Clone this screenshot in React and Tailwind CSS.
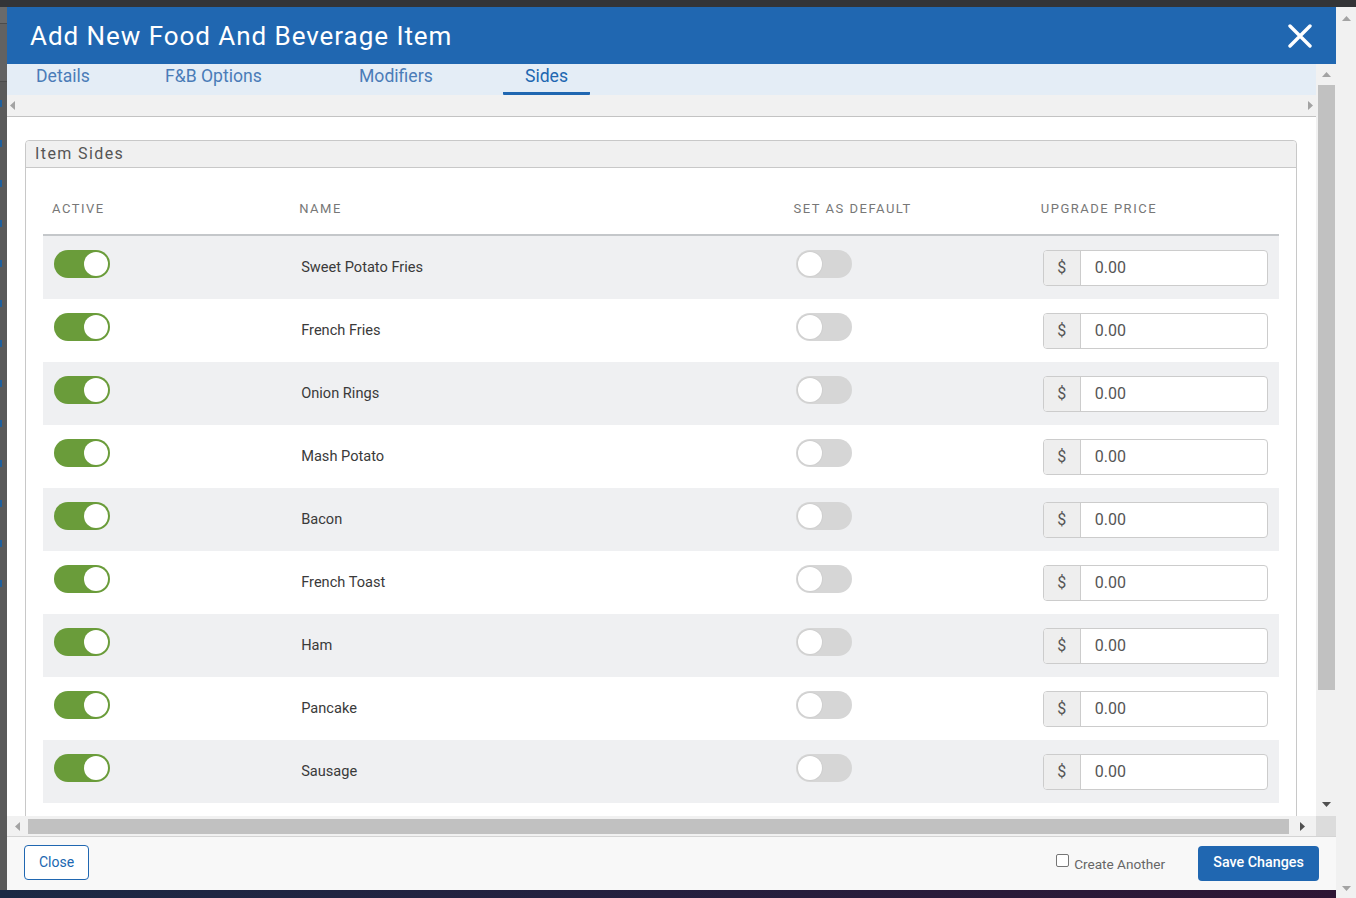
import React from "react";

const ROWS = [
  "Sweet Potato Fries",
  "French Fries",
  "Onion Rings",
  "Mash Potato",
  "Bacon",
  "French Toast",
  "Ham",
  "Pancake",
  "Sausage",
];

function Arrow({ dir, color = "#a3a3a3" }) {
  const pts = {
    up: "0,6 4.5,1 9,6",
    down: "0,1 4.5,6 9,1",
    left: "6,0 1,4.5 6,9",
    right: "1,0 6,4.5 1,9",
  }[dir];
  const vert = dir === "up" || dir === "down";
  return (
    <svg width={vert ? 9 : 7} height={vert ? 7 : 9} viewBox={vert ? "0 0 9 7" : "0 0 7 9"} className="block">
      <polygon points={pts} fill={color} />
    </svg>
  );
}

function ToggleOn() {
  return (
    <div className="w-[56px] h-[28px] rounded-full bg-[#6a9c3a] flex items-center justify-end p-[2px]">
      <div className="w-[24px] h-[24px] rounded-full bg-white" />
    </div>
  );
}

function ToggleOff() {
  return (
    <div className="w-[56px] h-[28px] rounded-full bg-[#d6d6d6] flex items-center justify-start p-[2px]">
      <div className="w-[24px] h-[24px] rounded-full bg-white shadow-[0_0_0_1px_#cfcfcf]" />
    </div>
  );
}

export default function App() {
  return (
    <div className="w-[1356px] h-[898px] overflow-hidden flex flex-col bg-[#333437] font-['Roboto',sans-serif]">
      <div className="h-[7px] shrink-0 bg-[#333437]" />
      <div className="flex h-[891px] shrink-0">
        <div className="flex flex-col w-[1336px] shrink-0">
          <div className="flex h-[883px] shrink-0">
            {/* page behind the modal */}
            <div className="w-[7px] shrink-0 bg-[#5a5a5a] flex flex-col">
              <div className="h-[17px] bg-[#6a6a6a] border-b border-[#4c4c4c]" />
              <div className="h-[58px] bg-[#626262] border-b border-[#4c4c4c]" />
              <div className="flex flex-col gap-[33px] pt-[18px]">
                {Array.from({ length: 13 }).map((_, i) => (
                  <div key={i} className="w-[2px] h-[7px] bg-[#1f5f9c]" />
                ))}
              </div>
            </div>

            {/* modal */}
            <div className="w-[1329px] shrink-0 flex flex-col bg-white">
              {/* header */}
              <div className="h-[57px] shrink-0 bg-[#2067b1] flex items-center justify-between pl-[23px] pr-[24px]">
                <div className="text-white text-[26px] tracking-[0.95px] leading-none">
                  Add New Food And Beverage Item
                </div>
                <svg width="24" height="24" viewBox="0 0 24 24" className="block">
                  <path d="M2 2 L22 22 M22 2 L2 22" stroke="white" strokeWidth="3.4" strokeLinecap="round" />
                </svg>
              </div>

              {/* body */}
              <div className="flex h-[752px] shrink-0">
                <div className="w-[1309px] shrink-0 flex flex-col">
                  {/* tabs */}
                  <div className="h-[31px] shrink-0 bg-[#e4edf6] flex items-start pl-[29px] text-[17.6px] leading-[21px] text-[#4a7cb8]">
                    <div className="w-[129px] pt-[2px]">Details</div>
                    <div className="w-[194px] pt-[2px]">F&amp;B Options</div>
                    <div className="w-[144px] pt-[2px]">Modifiers</div>
                    <div className="w-[87px] text-center h-[31px] pt-[2px] border-b-[3px] border-[#2067b1] text-[#2067b1] rounded-b-[1px]">
                      Sides
                    </div>
                  </div>
                  {/* tab scroller */}
                  <div className="h-[22px] shrink-0 bg-[#f1f1f1] border-b border-[#c3c3c3] flex items-center justify-between px-[2px]">
                    <Arrow dir="left" />
                    <Arrow dir="right" />
                  </div>
                  {/* content */}
                  <div className="flex-1 overflow-hidden bg-white pt-[23px] pl-[18px] pr-[19px]">
                    <div className="border border-[#c8c8c8] rounded-t-[4px] h-[800px]">
                      <div className="h-[27px] bg-[#f0f0f0] border-b border-[#c8c8c8] rounded-t-[4px] flex items-center pl-[9px] text-[16px] tracking-[1.4px] text-[#555]">
                        Item Sides
                      </div>
                      <div className="px-[17px]">
                        <div className="grid grid-cols-[1fr_2fr_1fr_1fr] border-b-2 border-[#c4c7ca] text-[13px] leading-[16px] tracking-[1.5px] text-[#777] uppercase">
                          <div className="px-[9px] pt-[33px] pb-[17px]">Active</div>
                          <div className="px-[9px] pt-[33px] pb-[17px]">Name</div>
                          <div className="px-[9px] pt-[33px] pb-[17px]">Set as default</div>
                          <div className="px-[9px] pt-[33px] pb-[17px]">Upgrade price</div>
                        </div>
                        {ROWS.map((name, i) => (
                          <div
                            key={name}
                            className={
                              "grid grid-cols-[1fr_2fr_1fr_1fr] h-[63px] " +
                              (i % 2 === 0 ? "bg-[#eff0f2]" : "bg-white")
                            }
                          >
                            <div className="px-[11px] pt-[14px]">
                              <ToggleOn />
                            </div>
                            <div className="px-[11px] flex items-center text-[14.6px] text-[#3a3a3a] pt-[1px]">
                              {name}
                            </div>
                            <div className="px-[11px] pt-[14px]">
                              <ToggleOff />
                            </div>
                            <div className="px-[11px] pt-[14px]">
                              <div className="h-[36px] flex border border-[#cccccc] rounded-[4px] overflow-hidden bg-white">
                                <div className="w-[37px] shrink-0 bg-[#eeeeee] border-r border-[#cccccc] flex items-center justify-center text-[16px] text-[#555]">
                                  $
                                </div>
                                <div className="flex-1 flex items-center px-[14px] text-[16px] text-[#555]">
                                  0.00
                                </div>
                              </div>
                            </div>
                          </div>
                        ))}
                      </div>
                    </div>
                  </div>
                </div>
                {/* vertical scrollbar */}
                <div className="w-[20px] shrink-0 bg-[#f1f1f1] flex flex-col items-center">
                  <div className="h-[21px] flex items-center justify-center">
                    <Arrow dir="up" />
                  </div>
                  <div className="w-[17px] h-[605px] bg-[#c1c1c1]" />
                  <div className="flex-1" />
                  <div className="h-[24px] flex items-center justify-center">
                    <Arrow dir="down" color="#505050" />
                  </div>
                </div>
              </div>

              {/* horizontal scrollbar */}
              <div className="h-[20px] shrink-0 flex">
                <div className="w-[1309px] bg-[#f1f1f1] flex items-center">
                  <div className="w-[21px] flex items-center justify-center">
                    <Arrow dir="left" />
                  </div>
                  <div className="w-[1261px] h-[15px] bg-[#c1c1c1]" />
                  <div className="flex-1 flex items-center justify-center">
                    <Arrow dir="right" color="#505050" />
                  </div>
                </div>
                <div className="w-[20px] bg-[#dcdcdc]" />
              </div>

              {/* footer */}
              <div className="h-[54px] shrink-0 bg-[#f8f8f8] border-t border-[#d4d4d4] flex items-center justify-between px-[17px]">
                <div className="w-[65px] h-[35px] -mt-[2px] border border-[#2067b1] rounded-[4px] bg-white flex items-center justify-center text-[14px] text-[#2067b1]">
                  Close
                </div>
                <div className="flex items-center -mt-[1px]">
                  <div className="flex items-center mt-[3px] mr-[33px]">
                    <div className="w-[13px] h-[13px] border border-[#767676] rounded-[2px] bg-white mr-[5px] -mt-[7px]" />
                    <span className="text-[13.6px] text-[#666]">Create Another</span>
                  </div>
                  <div className="w-[121px] h-[35px] rounded-[4px] bg-[#2067b1] flex items-center justify-center text-[14.3px] font-medium text-white">
                    Save Changes
                  </div>
                </div>
              </div>
            </div>
          </div>
          <div className="h-[8px] shrink-0 bg-linear-to-r from-[#1b2944] via-[#251f3e] to-[#2e1534]" />
        </div>
        {/* outer page scrollbar */}
        <div className="w-[20px] shrink-0 bg-[#f1f1f1] flex flex-col items-center">
          <div className="h-[22px] flex items-center justify-center">
            <Arrow dir="up" />
          </div>
          <div className="flex-1" />
          <div className="h-[20px] flex items-center justify-center">
            <Arrow dir="down" />
          </div>
        </div>
      </div>
    </div>
  );
}
